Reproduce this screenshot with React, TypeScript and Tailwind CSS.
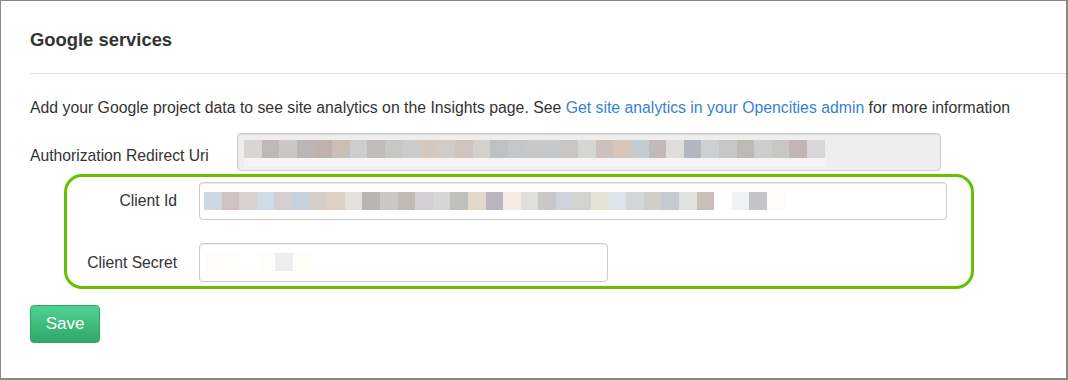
import React from "react";

const authBlocks = [
  "bg-[#d9d6d1]", "bg-[#c0b8b6]", "bg-[#ccc6c4]", "bg-[#b8b6b6]", "bg-[#bfb2ae]", "bg-[#cbbfb5]",
  "bg-[#cdcdcf]", "bg-[#c2bcb9]", "bg-[#c8c8c3]", "bg-[#cacbcd]", "bg-[#d3c7be]", "bg-[#cfcbcb]",
  "bg-[#d0c4bf]", "bg-[#d4d1cd]", "bg-[#bfc0c4]", "bg-[#c4c7ca]", "bg-[#c9c8c8]", "bg-[#c4c9cc]",
  "bg-[#cac6c4]", "bg-[#d6d7d3]", "bg-[#cdc1bb]", "bg-[#d6c5b8]", "bg-[#c3ccd3]", "bg-[#c2b9b9]",
  "bg-[#deddda]", "bg-[#b1b6c1]", "bg-[#cbd0d1]", "bg-[#c6c6c6]", "bg-[#bcbab2]", "bg-[#cdcdcd]",
  "bg-[#c8c7c2]", "bg-[#c2b5b4]", "bg-[#d7d7d9]",
];

const idBlocks = [
  "bg-[#cfd6e4]", "bg-[#d0c2c2]", "bg-[#dbd2d0]", "bg-[#cfdce8]", "bg-[#d4cfd0]", "bg-[#c5d1de]",
  "bg-[#d5cdc6]", "bg-[#dfcfc5]", "bg-[#e3e3db]", "bg-[#bab5ae]", "bg-[#c9c8c5]", "bg-[#c3b9b3]",
  "bg-[#d3d0d4]", "bg-[#d6d6d6]", "bg-[#bfbfbd]", "bg-[#e3d8c9]", "bg-[#b8b5c0]", "bg-[#f3ebe4]",
  "bg-[#dfdedb]", "bg-[#c8c8c8]", "bg-[#ced2d9]", "bg-[#d3d3ce]", "bg-[#e3e3d6]", "bg-[#dde5ec]",
  "bg-[#d4d7d7]", "bg-[#d0cecb]", "bg-[#c6c9d2]", "bg-[#dee3de]", "bg-[#cbbeba]", "bg-[#ffffff]",
  "bg-[#eff2f5]", "bg-[#c3c3cc]", "bg-[#fffcf5]",
];

const secretBlocks = [
  "bg-[#fdfcfa]", "bg-[#fdfdfb]", "bg-[#ffffff]", "bg-[#fdfdfb]", "bg-[#eceeed]", "bg-[#fefef8]",
];

const Blocks = ({ items }: { items: string[] }) => (
  <div className="flex">
    {items.map((c, i) => (
      <div key={i} className={`w-[17.6px] h-[18px] ${c}`} />
    ))}
  </div>
);

export default function App() {
  return (
    <div
      className="w-[1068px] h-[380px] bg-white border-l border-t border-r-2 border-b-2 border-[#888] text-[#333] overflow-hidden"
      style={{ fontFamily: '"Liberation Sans", Arial, sans-serif' }}
    >
      <div className="pl-[29px] pt-[29px]">
        <h2 className="text-[18.4px] leading-[20px] font-bold">Google services</h2>
        <div className="mt-[23px] h-px bg-[#ddd]" />
      </div>

      <div className="pl-[29px]">
        <p className="mt-[24px] text-[15.8px] leading-[20px]">
          Add your Google project data to see site analytics on the Insights page. See{" "}
          <a className="text-[#3a7fd4]">Get site analytics in your Opencities admin</a> for more information
        </p>

        <div className="mt-[15px] flex items-center">
          <label className="w-[207px] text-[15.7px] pt-[8px]">Authorization Redirect Uri</label>
          <div className="w-[704px] h-[38px] rounded-[4px] border border-[#ccc] bg-[#eee] shadow-[inset_0_1px_1px_rgba(0,0,0,0.075)] pl-[6px] pt-[6px]">
            <Blocks items={authBlocks} />
            <div className="w-[582px] h-[9px] bg-[#f4f4f4]" />
          </div>
        </div>

        <div className="mt-[3px] ml-[34px] w-[910px] h-[115px] rounded-[18px] border-[3.5px] border-[#66c000] pt-[5px]">
          <div className="flex items-center">
            <label className="w-[110px] text-right text-[15.7px]">Client Id</label>
            <div className="ml-[22px] w-[748px] h-[38px] rounded-[4px] border border-[#ccc] bg-white shadow-[inset_0_1px_1px_rgba(0,0,0,0.075)] pl-[4px] pt-[9px]">
              <Blocks items={idBlocks} />
            </div>
          </div>
          <div className="mt-[23px] flex items-center">
            <label className="w-[110px] text-right text-[15.7px]">Client Secret</label>
            <div className="ml-[22px] w-[409px] h-[39px] rounded-[4px] border border-[#ccc] bg-white shadow-[inset_0_1px_1px_rgba(0,0,0,0.075)] pl-[5px] pt-[9px]">
              <Blocks items={secretBlocks} />
            </div>
          </div>
        </div>

        <button className="mt-[16px] w-[70px] h-[38px] rounded-[4px] border border-[#2fa468] bg-gradient-to-b from-[#4fd391] to-[#2fa76a] text-white text-[17px]">
          Save
        </button>
      </div>
    </div>
  );
}
